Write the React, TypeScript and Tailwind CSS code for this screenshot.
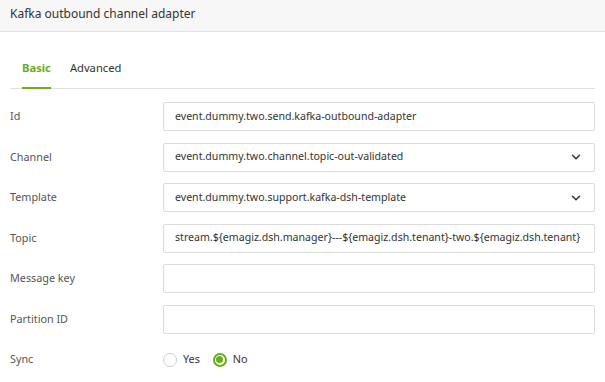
import { ChevronDown } from 'lucide-react'

const font = { fontFamily: '"Noto Sans", "Open Sans", sans-serif' }

function Field({ label, value, select }: { label: string; value?: string; select?: boolean }) {
  return (
    <div className="flex items-center h-[29px] mb-[11.5px]">
      <label className="w-[153px] shrink-0 text-[10.8px] text-[#555]">{label}</label>
      <div className="flex-1 h-full border border-[#dcdcdc] rounded-[2px] bg-white flex items-center pl-[11px] pr-[11px]">
        <span className="flex-1 text-[10.6px] text-[#333] whitespace-nowrap">{value}</span>
        {select && <ChevronDown size={14} strokeWidth={2.5} className="text-[#333]" />}
      </div>
    </div>
  )
}

export default function App() {
  return (
    <div className="w-[605px] h-[382px] bg-white overflow-hidden" style={font}>
      <div className="h-[32px] bg-[#f7f7f7] border-b border-[#e2e2e2] flex items-center px-[10px] pb-[3px]">
        <span className="text-[12px] text-[#333]">Kafka outbound channel adapter</span>
      </div>

      <div className="px-[10px]">
        <div className="flex border-b border-[#e0e0e0] h-[57px] items-end">
          <div className="ml-[12px] pb-[10px] border-b-2 border-[#6aad1d] -mb-px text-[11.2px] font-bold text-[#6aad1d]">Basic</div>
          <div className="ml-[19px] pb-[11px] text-[11.2px] text-[#333]">Advanced</div>
        </div>

        <div className="pt-[13px]">
          <Field label="Id" value="event.dummy.two.send.kafka-outbound-adapter" />
          <Field label="Channel" value="event.dummy.two.channel.topic-out-validated" select />
          <Field label="Template" value="event.dummy.two.support.kafka-dsh-template" select />
          <Field label="Topic" value="stream.${emagiz.dsh.manager}---${emagiz.dsh.tenant}-two.${emagiz.dsh.tenant}" />
          <Field label="Message key" />
          <Field label="Partition ID" />
          <div className="flex items-center h-[29px]">
            <label className="w-[153px] shrink-0 text-[10.8px] text-[#555]">Sync</label>
            <div className="flex items-center gap-[6px]">
              <span className="w-[14px] h-[14px] rounded-full border border-[#cfcfcf] bg-white" />
              <span className="text-[10.8px] text-[#333]">Yes</span>
              <span className="ml-[7px] w-[14px] h-[14px] rounded-full border-2 border-[#6aad1d] flex items-center justify-center">
                <span className="w-[7px] h-[7px] rounded-full bg-[#6aad1d]" />
              </span>
              <span className="text-[10.8px] text-[#333]">No</span>
            </div>
          </div>
        </div>
      </div>
    </div>
  )
}
